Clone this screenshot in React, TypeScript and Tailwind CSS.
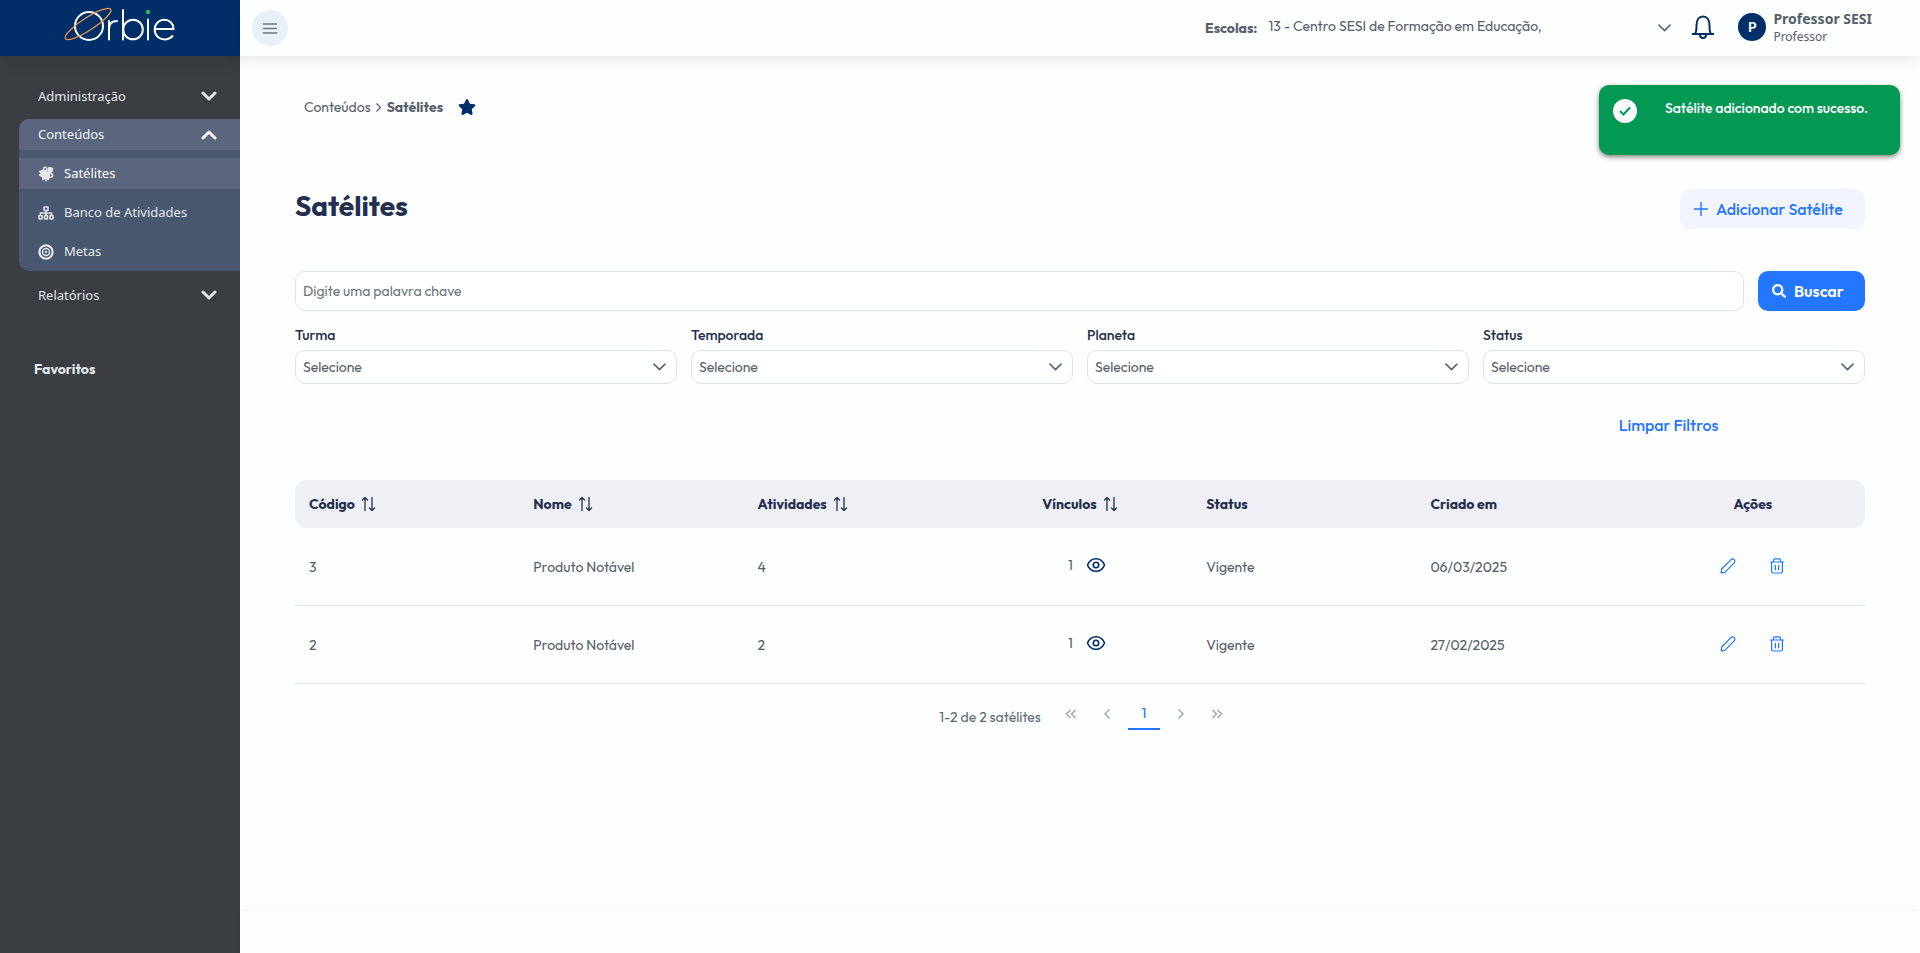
import { useState } from 'react';
import { FaSearch, FaStar } from 'react-icons/fa';

const filtros = ['Turma', 'Temporada', 'Planeta', 'Status'];

const satelites = [
  { codigo: 3, nome: 'Produto Notável', atividades: 4, vinculos: 1, status: 'Vigente', criadoEm: '06/03/2025' },
  { codigo: 2, nome: 'Produto Notável', atividades: 2, vinculos: 1, status: 'Vigente', criadoEm: '27/02/2025' },
];

const colunas = [
  { titulo: 'Código', ordena: true, centro: false },
  { titulo: 'Nome', ordena: true, centro: false },
  { titulo: 'Atividades', ordena: true, centro: false },
  { titulo: 'Vínculos', ordena: true, centro: true },
  { titulo: 'Status', ordena: false, centro: false },
  { titulo: 'Criado em', ordena: false, centro: false },
  { titulo: 'Ações', ordena: false, centro: true },
];

const Logo = () => (
  <svg width="112" height="36" viewBox="0 0 112 36" fill="none" stroke="#fff" strokeWidth="2" strokeLinecap="round">
    <circle cx="25" cy="19" r="14" />
    <ellipse cx="24" cy="17" rx="27" ry="6.2" transform="rotate(-33 24 17)" stroke="#e8924f" strokeWidth="1.3" />
    <path d="M45 32.500V14M45 22c0-5 3-8 8-8" />
    <path d="M59 3v29.500" />
    <circle cx="69" cy="22.500" r="9.800" />
    <path d="M84 12.500v20" />
    <circle cx="84" cy="5" r="2.200" fill="#2fb457" stroke="none" />
    <path d="M91.500 22h18c0-5.500-4-9.300-9.200-9.300s-9.600 4-9.600 9.800 4.200 9.900 9.800 9.900c3.300 0 6-1.200 8-3.400" />
  </svg>
);

const IconeSatelite = () => (
  <svg width="16" height="16" viewBox="0 0 16 16" fill="none" stroke="#e3e6ea" strokeWidth="1.500" strokeLinejoin="round">
    <path d="M4.500 4.500L7 5.500l3.500 1 .5 4-.5 3-3-1.500L5 13.500 4.500 11 1.500 9 4 7.500 1.500 5.500z" fill="#e3e6ea" />
    <circle cx="7.200" cy="3" r="1.700" />
    <path d="M10 5l1-3.500 3.500 1L14 5.500l-3 1z" fill="#e3e6ea" />
    <circle cx="12.800" cy="9.300" r="1.900" />
    <path d="M8 12v3.500" />
  </svg>
);

const IconeBanco = () => (
  <svg width="16" height="14" viewBox="0 0 16 14" fill="none" stroke="currentColor" strokeWidth="1.600">
    <rect x="6" y="1" width="4" height="3.500" rx=".5" />
    <path d="M8 4.500v5M2.500 9.500V7h11v2.500" />
    <rect x="1" y="9.500" width="3" height="3.500" rx=".5" />
    <rect x="6.500" y="9.500" width="3" height="3.500" rx=".5" />
    <rect x="12" y="9.500" width="3" height="3.500" rx=".5" />
  </svg>
);

const IconeMetas = () => (
  <svg width="16" height="16" viewBox="0 0 16 16" fill="none" stroke="currentColor">
    <circle cx="8" cy="8" r="6.600" strokeWidth="2.200" />
    <circle cx="8" cy="8" r="3.500" strokeWidth="1.500" />
    <circle cx="8" cy="8" r="1.200" fill="currentColor" stroke="none" />
  </svg>
);

const Seta = ({ cima = false }: { cima?: boolean }) => (
  <svg width="16" height="10" viewBox="0 0 16 10" fill="none" stroke="currentColor" strokeWidth="3" strokeLinecap="round" strokeLinejoin="round">
    <path d={cima ? 'M2 8l6-6 6 6' : 'M2 2l6 6 6-6'} />
  </svg>
);

const SetaFina = () => (
  <svg className="pointer-events-none absolute right-[11px] top-1/2 -translate-y-1/2 text-[#5f6c76]" width="13" height="8" viewBox="0 0 13 8" fill="none" stroke="currentColor" strokeWidth="1.700" strokeLinecap="round" strokeLinejoin="round">
    <path d="M1 1.200l5.500 5.500L12 1.200" />
  </svg>
);

const Ordenar = () => (
  <svg width="15" height="16" viewBox="0 0 15 16" fill="none" stroke="currentColor" strokeWidth="1.300" strokeLinecap="round" strokeLinejoin="round">
    <path d="M4 14.500V1.500M1.500 4L4 1.500 6.500 4M11 1.500v13M8.500 12l2.500 2.500 2.500-2.500" />
  </svg>
);

const Olho = () => (
  <svg width="20" height="16" viewBox="0 0 20 16" fill="none" stroke="#002e69" strokeWidth="1.600">
    <path d="M1.500 8C3 4.200 6.200 1.700 10 1.700S17 4.200 18.500 8C17 11.800 13.800 14.300 10 14.300S3 11.800 1.500 8z" />
    <circle cx="10" cy="8" r="2.700" />
  </svg>
);

const Lapis = () => (
  <svg width="16" height="16" viewBox="0 0 16 16" fill="none" stroke="currentColor" strokeWidth="1.200" strokeLinejoin="round">
    <path d="M1.200 14.800l.5-3.800L11 1.700a2.200 2.200 0 0 1 3.200 3.200L4.800 14.300z" />
  </svg>
);

const Lixeira = () => (
  <svg width="16" height="16" viewBox="0 0 16 16" fill="none" stroke="currentColor" strokeWidth="1.200" strokeLinecap="round">
    <path d="M1.500 4h13M4.500 4V2.300c0-.9.500-1.400 1.400-1.400h4.200c.9 0 1.400.5 1.400 1.400V4M2.600 4v9.500c0 1 .5 1.500 1.500 1.500h7.800c1 0 1.500-.5 1.500-1.500V4M6.400 7.300v4.500M9.600 7.300v4.500" />
  </svg>
);

const Pagina = ({ d, label }: { d: string; label: string }) => (
  <button aria-label={label} className="flex h-8 w-9 items-center justify-center text-[#a3aab2]">
    <svg width="12" height="12" viewBox="0 0 12 12" fill="none" stroke="currentColor" strokeWidth="1.700" strokeLinecap="round" strokeLinejoin="round">
      <path d={d} />
    </svg>
  </button>
);

const App = () => {
  const [aberto, setAberto] = useState(true);
  const [busca, setBusca] = useState('');

  return (
    <div className="flex min-h-screen bg-[#fefefe] font-['Outfit','Lato',sans-serif] text-sm text-[#56606a]">
      {/* Menu lateral */}
      <aside className="flex w-60 shrink-0 flex-col bg-[#3a3d42] font-['Noto_Sans',sans-serif] text-[13px] text-[#e3e6ea]">
        <div className="flex h-14 items-start justify-center bg-[#002e69] pt-[7px] shadow-[0_4px_16px_rgba(0,0,0,0.09)]">
          <Logo />
        </div>
        <nav className="pt-[21px]">
          <button className="flex h-[38px] w-full items-center justify-between pl-[38px] pr-[23px]">
            Administração <Seta />
          </button>
          <div className="mt-1 ml-[19px] overflow-hidden rounded-l-[10px] bg-[#4a5771]">
            <button onClick={() => setAberto(!aberto)} className="flex h-[31px] w-full items-center justify-between bg-[#5b667e] pl-[19px] pr-[23px] text-[#f4f5f7]">
              Conteúdos <Seta cima={aberto} />
            </button>
            {aberto && (
              <ul className="flex flex-col gap-2 pb-1 pt-2">
                <li>
                  <a href="#satelites" className="flex h-[31px] items-center gap-[10px] bg-[#5b667e] pl-[19px] text-white">
                    <IconeSatelite /> Satélites
                  </a>
                </li>
                <li>
                  <a href="#atividades" className="flex h-[31px] items-center gap-[10px] pl-[19px]">
                    <IconeBanco /> Banco de Atividades
                  </a>
                </li>
                <li>
                  <a href="#metas" className="flex h-[31px] items-center gap-[10px] pl-[19px]">
                    <IconeMetas /> Metas
                  </a>
                </li>
              </ul>
            )}
          </div>
          <button className="mt-[5px] flex h-[38px] w-full items-center justify-between pl-[38px] pr-[23px]">
            Relatórios <Seta />
          </button>
        </nav>
        <h2 className="mt-[45px] pl-[34px] font-['Outfit','Lato',sans-serif] text-sm font-bold leading-5">Favoritos</h2>
      </aside>

      <div className="flex min-w-0 flex-1 flex-col">
        {/* Barra superior */}
        <header className="flex h-14 items-center justify-between bg-[#fdfefe] pl-3 pr-12 shadow-[0_4px_16px_rgba(0,0,0,0.09)]">
          <button aria-label="Menu" className="flex size-9 items-center justify-center rounded-full bg-[#e8f0f8]">
            <svg width="14" height="11" viewBox="0 0 14 11" stroke="#6b7580" strokeWidth="1.400">
              <path d="M0 1h14M0 5.500h14M0 10h14" />
            </svg>
          </button>
          <div className="flex items-center">
            <label htmlFor="escolas" className="font-bold">Escolas:</label>
            <div className="relative ml-[11px] w-[414px]">
              <select id="escolas" className="w-full appearance-none bg-transparent pb-1">
                <option>13 - Centro SESI de Formação em Educação,</option>
              </select>
              <SetaFina />
            </div>
            <div className="flex items-center pb-[3px] pl-[9px]">
              <button aria-label="Notificações" className="text-[#002e69]">
                <svg width="24" height="24" viewBox="0 0 24 24" fill="none" stroke="currentColor" strokeWidth="2" strokeLinejoin="round">
                  <path d="M1 19h22M4 19c1.500-2 1.500-4.500 1.500-8.500C5.500 5 8 1.500 12 1.500S18.500 5 18.500 10.500c0 4 0 6.500 1.500 8.500M9 20c0 1.800 1.200 3 3 3s3-1.200 3-3" />
                </svg>
              </button>
              <div className="ml-[23px] flex size-7 items-center justify-center rounded-full bg-[#002e69] font-semibold text-white">P</div>
              <div className="ml-[7px] font-['Noto_Sans',sans-serif]">
                <div className="font-bold leading-5">Professor SESI</div>
                <div className="text-xs leading-4">Professor</div>
              </div>
            </div>
          </div>
        </header>

        <main className="flex-1 px-[55px] pt-[39px]">
          <div className="flex items-center pl-[9px] leading-6">
            <a href="#conteudos">Conteúdos</a>
            <svg className="mx-[5px]" width="6" height="9" viewBox="0 0 6 9" fill="none" stroke="currentColor" strokeWidth="1.200">
              <path d="M.5.500l4 4-4 4" />
            </svg>
            <span className="font-bold">Satélites</span>
            <FaStar size={18} className="ml-[15px] text-[#002e69]" />
          </div>

          <div className="mt-[70px] flex items-start justify-between">
            <h1 className="text-[28px] font-bold leading-[34px] text-[#232f4e]">Satélites</h1>
            <button className="flex h-10 w-[185px] items-center gap-2 rounded-[10px] bg-[#f2f4ff] pl-[14px] text-base font-medium text-[#2276ff]">
              <svg width="14" height="14" viewBox="0 0 14 14" stroke="currentColor" strokeWidth="1.400">
                <path d="M7 0v14M0 7h14" />
              </svg>
              Adicionar Satélite
            </button>
          </div>

          <div className="mt-[42px] flex gap-[14px]">
            <input
              aria-label="Palavra chave"
              value={busca}
              onChange={(e) => setBusca(e.target.value)}
              placeholder="Digite uma palavra chave"
              className="h-10 min-w-0 flex-1 rounded-[10px] border border-[#dee2ea] bg-white px-[7px] placeholder:text-[#6c757d]"
            />
            <button className="flex h-10 w-[107px] items-center gap-2 rounded-[10px] bg-[#2276ff] pl-[14px] text-base font-semibold text-white">
              <FaSearch size={14} /> Buscar
            </button>
          </div>

          <div className="mt-[14px] grid grid-cols-4 gap-[14px]">
            {filtros.map((filtro) => (
              <div key={filtro}>
                <label htmlFor={filtro} className="block font-medium leading-5 text-[#232f4e]">{filtro}</label>
                <div className="relative mt-[5px]">
                  <select id={filtro} className="h-[34px] w-full appearance-none rounded-[10px] border border-[#dee2ea] bg-white px-[7px]">
                    <option>Selecione</option>
                  </select>
                  <SetaFina />
                </div>
              </div>
            ))}
          </div>

          <div className="mt-[29px] grid grid-cols-4 gap-[14px]">
            <button className="col-start-4 justify-self-center pr-[11px] text-base font-medium text-[#2276ff]">Limpar Filtros</button>
          </div>

          <div className="mt-[43px] bg-[#fdfeff] pb-[19px]">
            <table className="w-full table-fixed border-separate border-spacing-0 text-left">
              <thead className="text-[#232f4e]">
                <tr className="h-12">
                  {colunas.map((coluna) => (
                    <th key={coluna.titulo} className="bg-[#eff0f6] px-[14px] font-bold first:rounded-l-xl last:rounded-r-xl">
                      <div className={coluna.centro ? 'flex items-center justify-center gap-[6px]' : 'flex items-center gap-[6px]'}>
                        {coluna.titulo}
                        {coluna.ordena && <button aria-label={`Ordenar por ${coluna.titulo}`}><Ordenar /></button>}
                      </div>
                    </th>
                  ))}
                </tr>
              </thead>
              <tbody>
                {satelites.map((item) => (
                  <tr key={item.codigo} className="h-[78px] *:border-b *:border-[#e5e8ec] *:px-[14px]">
                    <td>{item.codigo}</td>
                    <td>{item.nome}</td>
                    <td>{item.atividades}</td>
                    <td>
                      <div className="flex items-center justify-center gap-[13px] pb-1 pl-[14px]">
                        {item.vinculos}
                        <button aria-label="Ver vínculos"><Olho /></button>
                      </div>
                    </td>
                    <td>{item.status}</td>
                    <td>{item.criadoEm}</td>
                    <td>
                      <div className="flex items-center justify-center gap-[33px] pb-[2px] text-[#2276ff]">
                        <button aria-label="Editar"><Lapis /></button>
                        <button aria-label="Excluir"><Lixeira /></button>
                      </div>
                    </td>
                  </tr>
                ))}
              </tbody>
            </table>
            <div className="flex items-start justify-center pl-[14px] pt-[14px] text-[#5f6c76]">
              <span className="mr-3 pt-[9px]">1-2 de 2 satélites</span>
              <Pagina label="Primeira" d="M5 2.500L1.500 6 5 9.500M10 2.500L6.500 6 10 9.500" />
              <Pagina label="Anterior" d="M8 2L4 6l4 4" />
              <button className="mx-[3px] h-8 w-8 border-b-2 border-[#2276ff] text-[#2276ff]">1</button>
              <Pagina label="Próxima" d="M4 2l4 4-4 4" />
              <Pagina label="Última" d="M2 2.500L5.500 6 2 9.500M7 2.500L10.500 6 7 9.500" />
            </div>
          </div>
        </main>
        <footer className="h-[42px] bg-[#fbfdfe] shadow-[0_-2px_6px_rgba(0,0,0,0.04)]" />
      </div>

      {/* Aviso */}
      <div role="status" className="absolute right-5 top-[85px] flex h-[70px] w-[301px] rounded-[10px] bg-[#049855] pl-[14px] pt-[14px] text-white shadow-[0_2px_5px_rgba(0,0,0,0.5)]">
        <svg width="24" height="24" viewBox="0 0 24 24" fill="none">
          <circle cx="12" cy="12" r="12" fill="#fcfcfc" />
          <path d="M7 12l3.500 3.500L17 8.500" stroke="#049855" strokeWidth="2" />
        </svg>
        <p className="flex-1 pr-1 text-center font-medium leading-[18px]">Satélite adicionado com sucesso.</p>
      </div>
    </div>
  );
};

export default App;
